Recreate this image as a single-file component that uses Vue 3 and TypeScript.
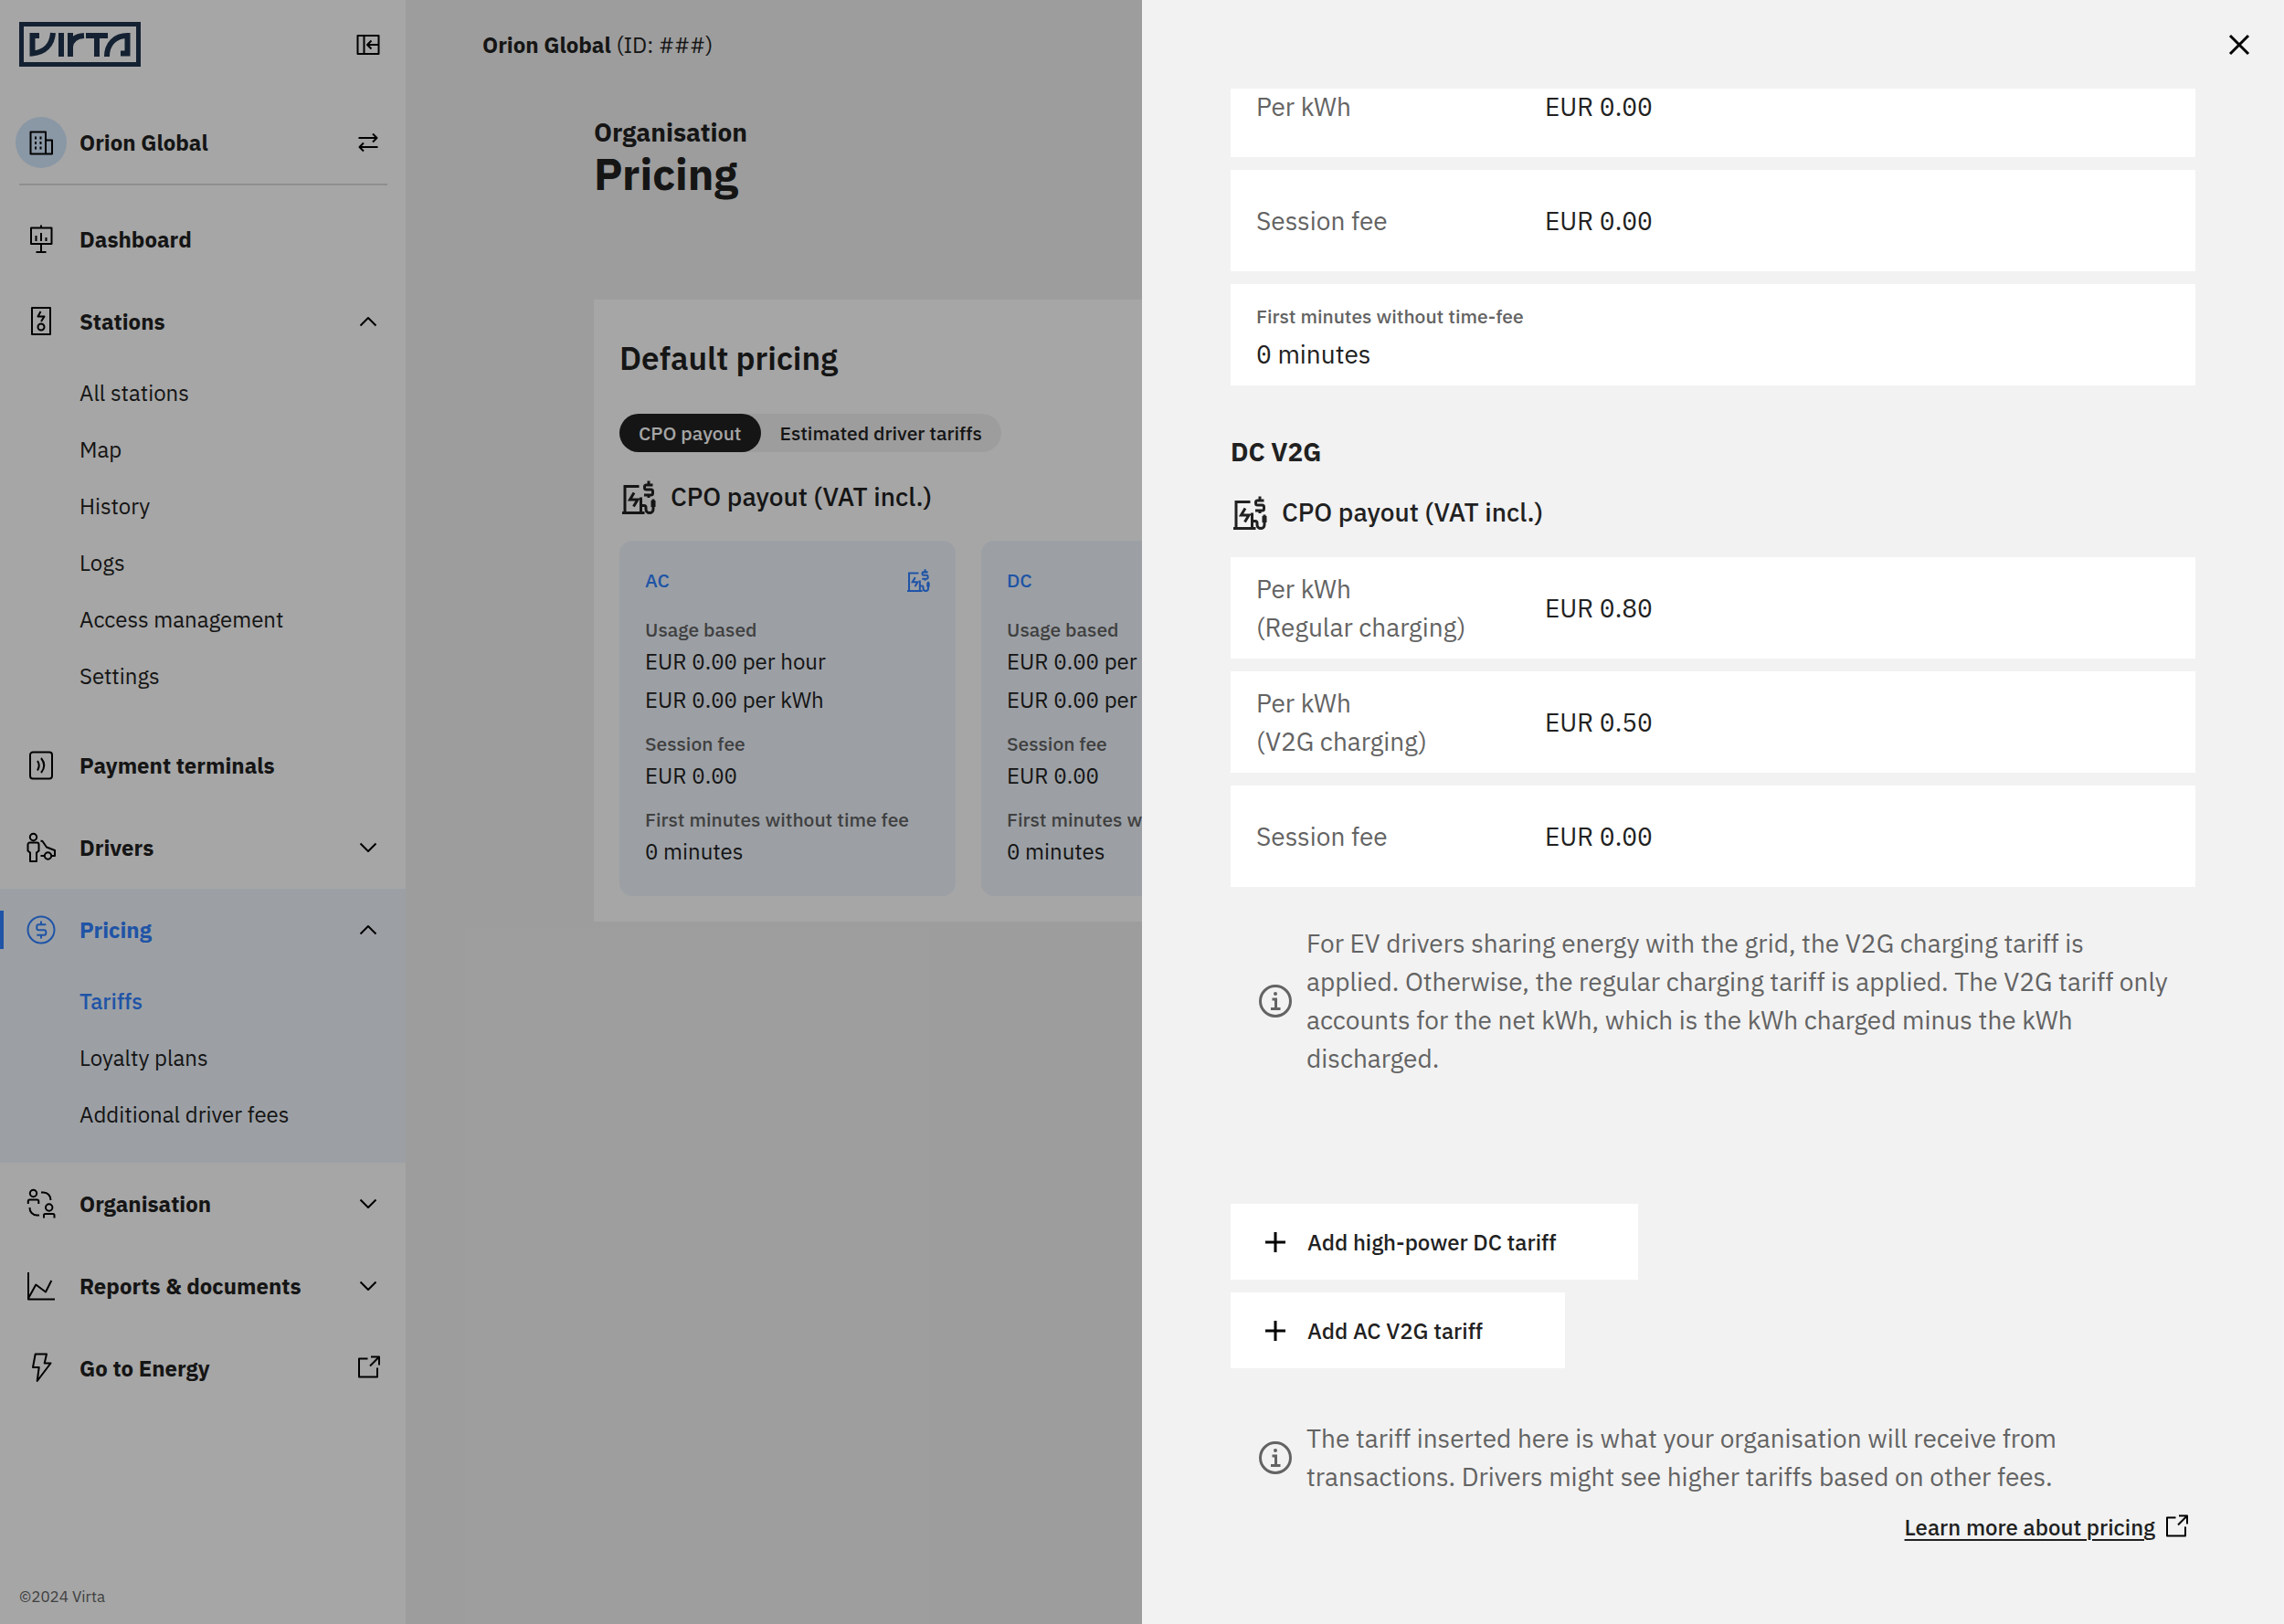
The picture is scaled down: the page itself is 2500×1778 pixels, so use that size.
<script setup lang="ts">
interface NavItem {
  label: string
  icon: string
  trailing?: 'up' | 'down' | 'external'
  active?: boolean
  children?: { label: string; current?: boolean }[]
}

interface PriceRow {
  label: string[]
  value: string
}

const ring = (cx: number, cy: number, r: number): string =>
  `M${cx - r} ${cy}a${r} ${r} 0 1 0 ${2 * r} 0a${r} ${r} 0 1 0 ${-2 * r} 0`

const icons: Record<string, string> = {
  dashboard:
    'M7 5.500h22.500v17.500h-22.500zM18 2.500v3M12.500 14v6M18 11v9M23.500 16v4M18 23v9M12.500 32h11',
  stations: 'M8 3h20v29h-20zM17.500 7l-3 5.500h7l-3.500 5.500' + ring(18, 24, 3.5),
  terminals:
    'M9 3.500h18a3 3 0 0 1 3 3v23a3 3 0 0 1 -3 3h-18a3 3 0 0 1 -3 -3v-23a3 3 0 0 1 3 -3zM14 13q3.500 5 0 10.500M18 10q6.500 8 0 16',
  drivers:
    ring(9.5, 6.5, 3.7) +
    'M5.500 12.500h8a2 2 0 0 1 2 2v7l-2.500 2v9.500h-7v-9.500l-2.500 -2v-7a2 2 0 0 1 2 -2zM17.500 10.500l2 .5l4.500 6.500l9 3.500v6h-3M17.500 27h4' +
    ring(25.5, 27, 3.7),
  pricing:
    ring(18, 18, 14.5) +
    'M23.300 12.300h-8a2 2 0 0 0 -2 2v2a2 2 0 0 0 2 2h6a2 2 0 0 1 2 2v1.500a2 2 0 0 1 -2 2h-8M18 8.500v3.500M18 24v3.500',
  organisation:
    ring(9.5, 6.5, 3.7) +
    'M3.800 18v-3a1.500 1.500 0 0 1 1.500 -1.500h8.500a1.500 1.500 0 0 1 1.500 1.500v3M18 5.500h2.500a8 8 0 0 1 8 8.500' +
    ring(26.7, 22, 3.7) +
    'M21 33.500v-3a1.500 1.500 0 0 1 1.500 -1.500h8.500a1.500 1.500 0 0 1 1.500 1.500v3M5.500 22a8 8 0 0 0 8 8.500h2.500',
  reports: 'M4 3v29.500h29M4 31.500l8.300 -15l10.700 8l6.300 -12.500',
  energy: 'M11.700 2.500h12.300l-2.300 10h6.800l-14.800 19.500l2 -15h-6.700z',
}

const nav: NavItem[] = [
  { label: 'Dashboard', icon: 'dashboard' },
  {
    label: 'Stations',
    icon: 'stations',
    trailing: 'up',
    children: [
      { label: 'All stations' },
      { label: 'Map' },
      { label: 'History' },
      { label: 'Logs' },
      { label: 'Access management' },
      { label: 'Settings' },
    ],
  },
  { label: 'Payment terminals', icon: 'terminals' },
  { label: 'Drivers', icon: 'drivers', trailing: 'down' },
  {
    label: 'Pricing',
    icon: 'pricing',
    trailing: 'up',
    active: true,
    children: [
      { label: 'Tariffs', current: true },
      { label: 'Loyalty plans' },
      { label: 'Additional driver fees' },
    ],
  },
  { label: 'Organisation', icon: 'organisation', trailing: 'down' },
  { label: 'Reports & documents', icon: 'reports', trailing: 'down' },
  { label: 'Go to Energy', icon: 'energy', trailing: 'external' },
]

const trailingPaths: Record<string, string> = {
  up: 'M5.500 18.500l8.500 -8.500l8.500 8.500',
  down: 'M5.500 9.500l8.500 8.500l8.500 -8.500',
  external: 'M13.500 3.500h-9.500v20h20v-10M17 1.500h9v9M26 1.500l-10 10',
}

const payoutPath =
  'M18.500 6.500h-15.500v29M0 35.500h24.500M13 13.500l-4.500 7.500h8.500l-4.500 7.500M33.500 5h-7a2 2 0 0 0 -2 2v1a2 2 0 0 0 2 2h5a2 2 0 0 1 2 2v2a2 2 0 0 1 -2 2h-7.500M29 .5v4.500M29 16v3M20.500 18.500v17M20.500 27.500h3.500a2 2 0 0 1 2 2v2a4 4 0 0 0 8 0v-11'
const infoPath = ring(18, 18, 16.5) + 'M14.500 16h4v10.500M13 26.500h10.500'

const tariffs = ['AC', 'DC']

const acRows: PriceRow[] = [
  { label: ['Per kWh'], value: 'EUR 0.00' },
  { label: ['Session fee'], value: 'EUR 0.00' },
]
const v2gRows: PriceRow[] = [
  { label: ['Per kWh', '(Regular charging)'], value: 'EUR 0.80' },
  { label: ['Per kWh', '(V2G charging)'], value: 'EUR 0.50' },
  { label: ['Session fee'], value: 'EUR 0.00' },
]
const additions = ['Add high-power DC tariff', 'Add AC V2G tariff']
</script>

<template>
  <div class="app">
    <aside class="sidebar">
      <div class="brand">
        <svg class="logo" width="133" height="49" viewBox="0 0 133 49" role="img" aria-label="Virta">
          <g fill="none" stroke="currentColor">
            <rect x="2.500" y="2.500" width="128" height="44" stroke-width="5" />
            <path
              stroke-width="6"
              d="M22 15h-7.500v19.500C28 33.500 36 25 37 12M46 12v26M56 12v26M56 27C57 20 62 15.500 71 15M73 15h24M85 18v20M96 38C96 24 105 15 118.500 15v19.500h-7.500"
            />
          </g>
        </svg>
        <button class="icon-button" type="button" aria-label="Collapse menu">
          <svg class="line" width="28" height="28" viewBox="0 0 28 28">
            <path d="M2.500 4h23v20h-23zM9.500 4v20M25.500 14h-12.500M17.500 9.500l-4.500 4.500l4.500 4.500" />
          </svg>
        </button>
      </div>
      <div class="org">
        <span class="org-mark">
          <svg class="line" width="36" height="36" viewBox="0 0 36 36">
            <path
              d="M6.500 6.500h16.500v24h-16.500zM23 15.500h7v15h-7M12 11.500v3M17.500 11.500v3M12 17v3M17.500 17v3M12 22.500v3M17.500 22.500v3"
            />
          </svg>
        </span>
        <span class="org-name">Orion Global</span>
        <button class="icon-button" type="button" aria-label="Switch organisation">
          <svg class="line" width="28" height="28" viewBox="0 0 28 28">
            <path d="M3.500 9h20M19 4.500l4.500 4.500l-4.500 4.500M24.500 19h-20M9 14.500l-4.500 4.500l4.500 4.500" />
          </svg>
        </button>
      </div>
      <nav>
        <div v-for="item in nav" :key="item.label" class="group" :class="{ active: item.active }">
          <a class="nav-row" href="#">
            <svg class="line" width="36" height="36" viewBox="0 0 36 36">
              <path :d="icons[item.icon]" />
            </svg>
            <span class="nav-label">{{ item.label }}</span>
            <svg v-if="item.trailing" class="line trailing" width="28" height="28" viewBox="0 0 28 28">
              <path :d="trailingPaths[item.trailing]" />
            </svg>
          </a>
          <ul v-if="item.children" class="sub">
            <li v-for="child in item.children" :key="child.label">
              <a href="#" :class="{ current: child.current }">{{ child.label }}</a>
            </li>
          </ul>
        </div>
      </nav>
      <p class="copyright">©2024 Virta</p>
    </aside>

    <main class="main">
      <div class="topbar"><strong>Orion Global</strong>&nbsp;(ID: ###)</div>
      <header class="page-head">
        <p class="eyebrow">Organisation</p>
        <h1>Pricing</h1>
      </header>
      <section class="panel">
        <h2>Default pricing</h2>
        <div class="toggle">
          <button type="button" class="selected">CPO payout</button>
          <button type="button">Estimated driver tariffs</button>
        </div>
        <h3 class="payout">
          <svg class="payout-icon" width="37" height="37" viewBox="0 0 37 37">
            <path :d="payoutPath" /><rect x="31.500" y="22" width="5" height="7" />
          </svg>
          CPO payout (VAT incl.)
        </h3>
        <div class="cards">
          <article v-for="name in tariffs" :key="name" class="card">
            <h4>
              {{ name }}
              <svg class="payout-icon" width="25" height="25" viewBox="0 0 37 37">
                <path :d="payoutPath" /><rect x="31.500" y="22" width="5" height="7" />
              </svg>
            </h4>
            <dl>
              <dt>Usage based</dt>
              <dd>EUR 0.00 per hour</dd>
              <dd>EUR 0.00 per kWh</dd>
              <dt>Session fee</dt>
              <dd>EUR 0.00</dd>
              <dt>First minutes without time fee</dt>
              <dd>0 minutes</dd>
            </dl>
          </article>
        </div>
      </section>
    </main>

    <div class="overlay"></div>

    <section class="drawer" role="dialog" aria-label="Edit pricing">
      <div class="drawer-head">
        <button class="icon-button" type="button" aria-label="Close">
          <svg class="line" width="28" height="28" viewBox="0 0 28 28">
            <path d="M4 4l20 20M24 4l-20 20" />
          </svg>
        </button>
      </div>
      <div class="drawer-body">
        <dl class="rows scrolled">
          <div v-for="row in acRows" :key="row.label[0]" class="row">
            <dt><span v-for="line in row.label" :key="line">{{ line }}</span></dt>
            <dd>{{ row.value }}</dd>
          </div>
          <div class="row stacked">
            <dt>First minutes without time-fee</dt>
            <dd>0 minutes</dd>
          </div>
        </dl>
        <h2 class="section-title">DC V2G</h2>
        <h3 class="payout drawer-payout">
          <svg class="payout-icon" width="37" height="37" viewBox="0 0 37 37">
            <path :d="payoutPath" /><rect x="31.500" y="22" width="5" height="7" />
          </svg>
          CPO payout (VAT incl.)
        </h3>
        <dl class="rows">
          <div v-for="row in v2gRows" :key="row.value" class="row">
            <dt><span v-for="line in row.label" :key="line">{{ line }}</span></dt>
            <dd>{{ row.value }}</dd>
          </div>
        </dl>
        <div class="note">
          <svg class="info" width="36" height="36" viewBox="0 0 36 36">
            <path :d="infoPath" /><circle cx="18" cy="10" r="2" />
          </svg>
          <p>
            For EV drivers sharing energy with the grid, the V2G charging tariff is applied. Otherwise, the regular
            charging tariff is applied. The V2G tariff only accounts for the net kWh, which is the kWh charged minus
            the kWh discharged.
          </p>
        </div>
        <div class="additions">
          <button v-for="label in additions" :key="label" type="button">
            <svg class="plus" width="22" height="22" viewBox="0 0 22 22"><path d="M11 0v22M0 11h22" /></svg>
            {{ label }}
          </button>
        </div>
        <div class="note payout-note">
          <svg class="info" width="36" height="36" viewBox="0 0 36 36">
            <path :d="infoPath" /><circle cx="18" cy="10" r="2" />
          </svg>
          <p>
            The tariff inserted here is what your organisation will receive from transactions. Drivers might see
            higher tariffs based on other fees.
          </p>
        </div>
        <div class="learn">
          <a href="#">Learn more about pricing</a>
          <svg class="line" width="28" height="28" viewBox="0 0 28 28"><path :d="trailingPaths.external" /></svg>
        </div>
      </div>
    </section>
  </div>
</template>

<style>
body {
  margin: 0;
}
</style>

<style scoped>
.app {
  position: relative;
  display: flex;
  min-height: 100vh;
  overflow: hidden;
  background: #f2f2f2;
  color: #212121;
  font-family: 'IBM Plex Sans', Roboto, 'Liberation Sans', sans-serif;
  font-size: 24px;
}
.app * {
  box-sizing: border-box;
}
h1,
h2,
h3,
h4,
p,
dl,
dd,
ul {
  margin: 0;
  padding: 0;
}
ul {
  list-style: none;
}
a {
  color: inherit;
  text-decoration: none;
}
button {
  border: 0;
  padding: 0;
  background: none;
  color: inherit;
  font: inherit;
}
svg {
  flex: none;
  display: block;
}
.line {
  fill: none;
  stroke: #000;
  stroke-width: 2;
  stroke-linejoin: round;
}
.sidebar {
  flex: none;
  display: flex;
  flex-direction: column;
  width: 444px;
  background: #fff;
}
.brand,
.org {
  display: flex;
  align-items: center;
}
.brand {
  justify-content: space-between;
  height: 97px;
  padding: 0 27px 0 21px;
}
.logo {
  color: #1f344e;
}
.org {
  height: 106px;
  margin: 0 20px 14px 21px;
  padding: 14px 7px 0 0;
  border-bottom: 2px solid #dcdcdc;
}
.org-mark {
  display: grid;
  place-items: center;
  width: 56px;
  height: 56px;
  margin: 0 14px 0 -4px;
  border-radius: 50%;
  background: #d4e8fe;
}
.org-name,
.nav-label {
  flex: 1;
  font-weight: 700;
}
.nav-row {
  display: flex;
  align-items: center;
  gap: 24px;
  height: 90px;
  padding: 0 27px;
}
.active {
  background: #f0f6fe;
}
.active .nav-row {
  position: relative;
  color: #3081ff;
}
.active .nav-row::before {
  content: '';
  position: absolute;
  left: 0;
  width: 4px;
  height: 42px;
  background: #3081ff;
}
.active .line:not(.trailing) {
  stroke: #3081ff;
}
.sub {
  padding: 2px 0 22px 87px;
}
.sub a {
  display: block;
  line-height: 62px;
}
.sub .current {
  color: #3081ff;
  font-weight: 500;
}
.copyright {
  margin-top: auto;
  padding: 0 21px 18px;
  color: #636363;
  font-size: 17px;
  line-height: 24px;
}
.main {
  flex: 1;
  min-width: 0;
}
.topbar {
  display: flex;
  align-items: center;
  height: 97px;
  padding-left: 84px;
}
.page-head {
  padding: 27px 206px 114px;
}
.eyebrow {
  font-size: 28px;
  font-weight: 700;
  line-height: 42px;
}
h1 {
  font-size: 48px;
  font-weight: 700;
  line-height: 48px;
}
.panel {
  margin: 0 206px;
  padding: 40px 28px 28px;
  background: #fff;
}
.panel h2 {
  font-size: 35px;
  font-weight: 600;
  line-height: 48px;
}
.toggle {
  display: inline-flex;
  margin-top: 37px;
  border-radius: 21px;
  background: #f2f2f2;
}
.toggle button {
  padding: 0 21px;
  border-radius: 21px;
  font-size: 21px;
  font-weight: 500;
  line-height: 42px;
}
.toggle .selected {
  background: #212121;
  color: #fff;
}
.payout {
  display: flex;
  align-items: center;
  gap: 16px;
  margin: 28px 0 27px;
  padding-left: 3px;
  font-size: 28px;
  font-weight: 500;
  line-height: 42px;
}
.payout-icon {
  fill: none;
  stroke: currentColor;
  stroke-width: 3;
}
.payout-icon rect {
  fill: currentColor;
  stroke: none;
}
.cards {
  display: flex;
  gap: 28px;
}
.card {
  flex: none;
  width: 368px;
  padding: 28px;
  border-radius: 14px;
  background: #f0f6fe;
}
.card h4 {
  display: flex;
  align-items: center;
  justify-content: space-between;
  margin-bottom: 26px;
  color: #3081ff;
  font-size: 21px;
  font-weight: 500;
  line-height: 30px;
}
.card dt {
  color: #636363;
  font-size: 21px;
  font-weight: 500;
  line-height: 27px;
}
.card dd + dt {
  margin-top: 14px;
}
.card dd {
  line-height: 42px;
}
/* ss04 is the dotted zero */
dd {
  font-feature-settings: 'ss04';
}
.overlay {
  position: absolute;
  inset: 0;
  background: rgba(0, 0, 0, 0.35);
}
.drawer {
  position: absolute;
  inset: 0 0 0 50%;
  background: #f2f2f2;
  font-size: 28px;
  line-height: 42px;
}
.drawer-head {
  display: flex;
  align-items: center;
  justify-content: flex-end;
  height: 97px;
  padding-right: 35px;
}
.drawer-head .line {
  stroke-width: 3;
}
.drawer-body {
  padding: 0 97px;
  overflow: hidden;
}
.rows {
  display: grid;
  gap: 14px;
}
.scrolled {
  margin-top: -36px;
}
.row {
  display: grid;
  grid-template-columns: 316px 1fr;
  align-items: center;
  min-height: 111px;
  padding: 0 28px;
  background: #fff;
}
.row dt {
  color: #636363;
}
.row dt span {
  display: block;
}
.stacked {
  grid-template-columns: 1fr;
  align-content: center;
}
.stacked dt {
  font-size: 21px;
  font-weight: 500;
}
.section-title {
  margin-top: 52px;
  font-size: 28px;
  font-weight: 700;
}
.drawer-payout {
  margin: 24px 0 28px;
}
.note {
  display: flex;
  align-items: center;
  gap: 16px;
  margin-top: 41px;
  padding: 0 28px 0 31px;
  color: #636363;
}
.info {
  fill: none;
  stroke: currentColor;
  stroke-width: 3;
}
.info circle {
  fill: currentColor;
  stroke: none;
}
.additions {
  display: flex;
  flex-direction: column;
  align-items: flex-start;
  gap: 14px;
  margin-top: 138px;
}
.additions button {
  display: flex;
  align-items: center;
  gap: 24px;
  height: 83px;
  padding: 0 90px 0 38px;
  background: #fff;
  font-size: 24px;
  font-weight: 500;
}
.plus {
  fill: none;
  stroke: #000;
  stroke-width: 3;
}
.payout-note {
  margin-top: 56px;
}
.learn {
  display: flex;
  align-items: center;
  justify-content: flex-end;
  gap: 9px;
  margin-top: 19px;
  padding-right: 7px;
  font-size: 24px;
  font-weight: 500;
  line-height: 30px;
}
.learn a {
  text-decoration: underline;
  text-decoration-thickness: 2px;
  text-underline-offset: 4px;
}
</style>
